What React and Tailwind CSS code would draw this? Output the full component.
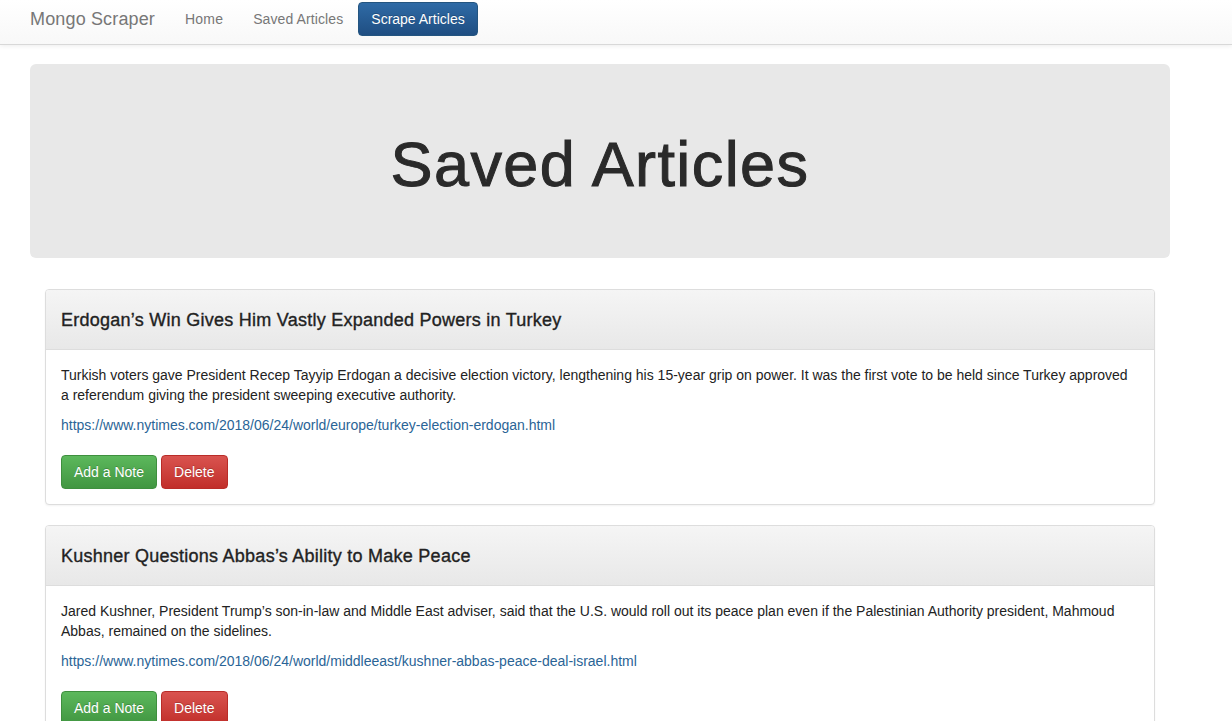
const articles = [
  {
    title: "Erdogan’s Win Gives Him Vastly Expanded Powers in Turkey",
    summary:
      "Turkish voters gave President Recep Tayyip Erdogan a decisive election victory, lengthening his 15-year grip on power. It was the first vote to be held since Turkey approved a referendum giving the president sweeping executive authority.",
    link: "https://www.nytimes.com/2018/06/24/world/europe/turkey-election-erdogan.html",
  },
  {
    title: "Kushner Questions Abbas’s Ability to Make Peace",
    summary:
      "Jared Kushner, President Trump’s son-in-law and Middle East adviser, said that the U.S. would roll out its peace plan even if the Palestinian Authority president, Mahmoud Abbas, remained on the sidelines.",
    link: "https://www.nytimes.com/2018/06/24/world/middleeast/kushner-abbas-peace-deal-israel.html",
  },
];

const ArticlePanel = ({ article }) => (
  <div className="mb-[20px] rounded-[4px] border border-[#dddddd] bg-white shadow-[0_1px_2px_rgba(0,0,0,0.05)]">
    <div className="flex h-[60px] items-center rounded-t-[3px] border-b border-[#dddddd] bg-gradient-to-b from-[#f5f5f5] to-[#e8e8e8] px-[15px]">
      <h3 className="text-[18px] leading-[20px] tracking-[0.25px] text-[#222] [-webkit-text-stroke:0.35px_#222]">
        {article.title}
      </h3>
    </div>
    <div className="p-[15px] text-[14px] leading-[20px] text-[#222]">
      <p>{article.summary}</p>
      <a href="#" className="mt-[10px] block text-[#2a6496]">
        {article.link}
      </a>
      <div className="mt-[20px] flex gap-[4px]">
        <button className="h-[34px] rounded-[4px] border border-[#3e8f3e] bg-gradient-to-b from-[#5cb85c] to-[#419641] px-[12px] text-[14px] text-white [text-shadow:0_-1px_0_rgba(0,0,0,0.2)]">
          Add a Note
        </button>
        <button className="h-[34px] rounded-[4px] border border-[#b92c28] bg-gradient-to-b from-[#d9534f] to-[#c12e2a] px-[12px] text-[14px] text-white [text-shadow:0_-1px_0_rgba(0,0,0,0.2)]">
          Delete
        </button>
      </div>
    </div>
  </div>
);

export default function App() {
  return (
    <div className="min-h-screen bg-white font-['Liberation_Sans',Arial,sans-serif] text-[#333]">
      <nav className="h-[45px] border-b border-[#d8d8d8] bg-gradient-to-b from-white to-[#f8f8f8] shadow-[0_1px_5px_rgba(0,0,0,0.08)]">
        <div className="flex h-[38px] items-center pl-[15px]">
          <a href="#" className="px-[15px] text-[18px] tracking-[0.15px] text-[#777]">
            Mongo Scraper
          </a>
          <a href="#" className="px-[15px] text-[14px] tracking-[0.2px] text-[#777]">
            Home
          </a>
          <a href="#" className="px-[15px] text-[14px] tracking-[0.1px] text-[#777]">
            Saved Articles
          </a>
          <button className="h-[34px] rounded-[4px] border border-[#245580] bg-gradient-to-b from-[#2f6ba6] to-[#1f4e82] px-[12px] text-[14px] text-white [text-shadow:0_-1px_0_rgba(0,0,0,0.2)]">
            Scrape Articles
          </button>
        </div>
      </nav>

      <div className="ml-[15px] w-[1170px] px-[15px]">
        <div className="mt-[19px] flex h-[194px] items-center justify-center rounded-[6px] bg-[#e8e8e8]">
          <h1 className="pt-[6px] text-[63px] leading-none tracking-[1.4px] text-[#2a2a2a] [-webkit-text-stroke:1px_#2a2a2a]">
            Saved Articles
          </h1>
        </div>

        <div className="mt-[31px] px-[15px]">
          {articles.map((a) => (
            <ArticlePanel key={a.link} article={a} />
          ))}
        </div>
      </div>
    </div>
  );
}
